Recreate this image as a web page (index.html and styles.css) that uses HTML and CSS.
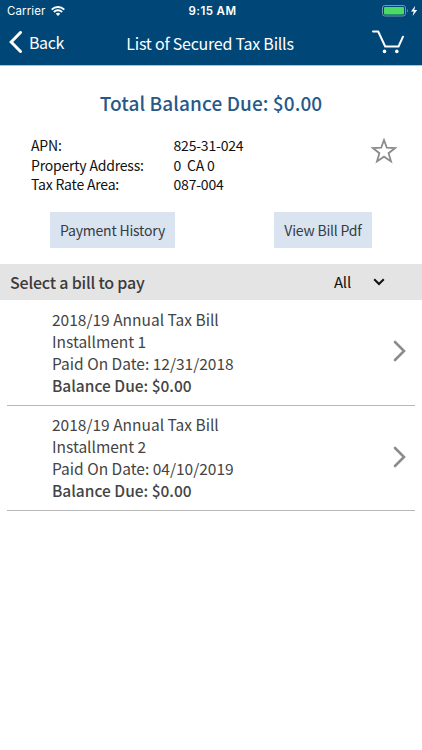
FILE: index.html
```
<!DOCTYPE html>
<html lang="en">
<head>
<meta charset="utf-8">
<title>List of Secured Tax Bills</title>
<link rel="stylesheet" href="styles.css">
</head>
<body>
<header class="header">
  <div class="status">
    <div class="carrier"><span>Carrier</span>
      <svg width="14" height="10" viewBox="0 0 14 10" fill="none" stroke="#fff" stroke-width="1.9"><path d="M.7 3.6a9 9 0 0 1 12.6 0M2.900 6a5.800 5.800 0 0 1 8.200 0"/><path d="M7 10 4.800 7.700a3.200 3.200 0 0 1 4.400 0z" fill="#fff" stroke="none"/></svg>
    </div>
    <div class="time">9:15 AM</div>
    <div class="power">
      <svg width="36" height="12" viewBox="0 0 36 12"><rect x=".5" y=".5" width="23" height="10.5" rx="2.4" fill="none" stroke="#7897b0"/><rect x="2" y="2" width="20" height="7.5" rx="1" fill="#4cd964"/><path d="M25 4v3.500c1.200-.6 1.200-2.900 0-3.500z" fill="#7897b0"/><path d="M33.200.8 29 6.400h2.700L30.600 11l4.600-6h-2.800z" fill="#fff"/></svg>
    </div>
  </div>
  <nav class="nav">
    <div class="back"><svg width="13" height="22" viewBox="0 0 13 22" fill="none" stroke="#fff" stroke-width="3"><path d="M11.500 1.500 2.200 11l9.300 9.500" stroke-linecap="round"/></svg><span>Back</span></div>
    <h1 class="title">List of Secured Tax Bills</h1>
    <svg class="cart" width="33" height="24" viewBox="0 0 33 24" fill="none" stroke="#fff" stroke-width="2"><path d="M1 1.500h5.200l7 15h13.300L31 6.700" stroke-linecap="round" stroke-linejoin="round"/><g fill="#fff" stroke="none"><circle cx="12.5" cy="21.400" r="1.800"/><circle cx="24.800" cy="21.400" r="1.800"/></g></svg>
  </nav>
</header>
<main>
  <h2 class="total">Total Balance Due: $0.00</h2>
  <section class="property">
    <dl class="facts">
      <dt>APN:</dt><dd>825-31-024</dd>
      <dt>Property Address:</dt><dd>0&nbsp; CA 0</dd>
      <dt>Tax Rate Area:</dt><dd>087-004</dd>
    </dl>
    <svg class="star" width="26" height="26" viewBox="0 0 26 26" fill="none" stroke="#8b8b8b" stroke-width="1.8"><path d="m13 2 2.800 7.700 8.400.3-6.600 5.200 2.400 8.200-7-4.700-7 4.700 2.400-8.200L1.800 10l8.400-.3z"/></svg>
  </section>
  <div class="actions">
    <button class="button history">Payment History</button>
    <button class="button pdf">View Bill Pdf</button>
  </div>
  <div class="filter">
    <h3 class="prompt">Select a bill to pay</h3>
    <div class="select"><span>All</span><svg width="12" height="8" viewBox="0 0 12 8" fill="none" stroke="#111" stroke-width="2"><path d="m1.200 1.200 4.800 4.800 4.800-4.800"/></svg></div>
  </div>
  <ul class="bills">
    <li class="bill">
      <div class="details"><p>2018/19 Annual Tax Bill</p><p>Installment 1</p><p>Paid On Date: 12/31/2018</p><p class="due">Balance Due: $0.00</p></div>
      <svg class="chevron" width="13" height="22" viewBox="0 0 13 22" fill="none" stroke="#8c8c8c" stroke-width="2.600"><path d="m2 2 9 9-9 9" stroke-linecap="round"/></svg>
    </li>
    <li class="bill">
      <div class="details"><p>2018/19 Annual Tax Bill</p><p>Installment 2</p><p>Paid On Date: 04/10/2019</p><p class="due">Balance Due: $0.00</p></div>
      <svg class="chevron" width="13" height="22" viewBox="0 0 13 22" fill="none" stroke="#8c8c8c" stroke-width="2.600"><path d="m2 2 9 9-9 9" stroke-linecap="round"/></svg>
    </li>
  </ul>
</main>
</body>
</html>
```
FILE: styles.css
```
* { box-sizing: border-box; margin: 0; padding: 0; }
body { width: 422px; height: 750px; overflow: hidden; background: #fff; color: #444; font-family: "Noto Sans CJK SC", "Open Sans", sans-serif; }
svg { display: block; flex: none; }
.header { height: 66px; background: #004677; color: #fff; border-bottom: 1px solid #a9c4d9; }
.status { display: grid; grid-template-columns: 1fr auto 1fr; height: 22px; align-items: center; padding: 0 4px 0 7px; font: 11.5px/22px Inter, sans-serif; }
.carrier { display: flex; align-items: center; gap: 6px; letter-spacing: .1px; }
.time { font-weight: 600; letter-spacing: .4px; }
.power { display: flex; justify-content: flex-end; }
.nav { display: grid; grid-template-columns: 1fr auto 1fr; height: 43px; align-items: center; padding: 0 17px 3px 9px; }
.back { display: flex; align-items: center; gap: 7px; font-size: 16px; line-height: 24px; letter-spacing: -.4px; }
.title { margin: 1px -3px 0 3px; font-size: 16px; line-height: 24px; font-weight: 400; letter-spacing: -.24px; }
.cart { justify-self: end; }
.total { margin-top: 21px; font-size: 19px; line-height: 32px; font-weight: 500; letter-spacing: .09px; color: #275889; text-align: center; }
.property { display: flex; justify-content: space-between; padding: 17px 25px 0 31px; }
.facts { display: grid; grid-template-columns: 142.5px auto; grid-auto-rows: 19.5px; font-size: 14px; line-height: 19.5px; letter-spacing: -.2px; color: #111; }
.star { margin-top: 2px; }
.actions { display: flex; justify-content: space-between; padding: 17px 50px 0; }
.button { height: 36px; border: 0; background: #d9e4f0; color: #363b41; font-family: inherit; font-size: 14px; line-height: 36px; letter-spacing: -.2px; white-space: nowrap; }
.history { width: 125px; }
.pdf { width: 98px; }
.filter { display: flex; align-items: center; justify-content: space-between; height: 36px; margin-top: 16px; padding: 0 37px 0 10px; background: #e4e4e4; }
.prompt { font-size: 16px; line-height: 24px; font-weight: 500; letter-spacing: -.2px; color: #3b3b3b; }
.select { display: flex; align-items: center; gap: 22px; font-size: 15px; line-height: 24px; letter-spacing: -.2px; color: #111; }
.bills { list-style: none; padding: 0 7px; }
.bill { display: flex; align-items: center; justify-content: space-between; height: 106px; padding: 0 9px 0 45px; border-bottom: 1px solid #b8b8b8; font-size: 15.5px; line-height: 22px; white-space: nowrap; }
.bill + .bill { height: 105.5px; }
.details { padding-bottom: 1px; }
.chevron { margin-bottom: 2px; }
.due { font-weight: 500; }
```
